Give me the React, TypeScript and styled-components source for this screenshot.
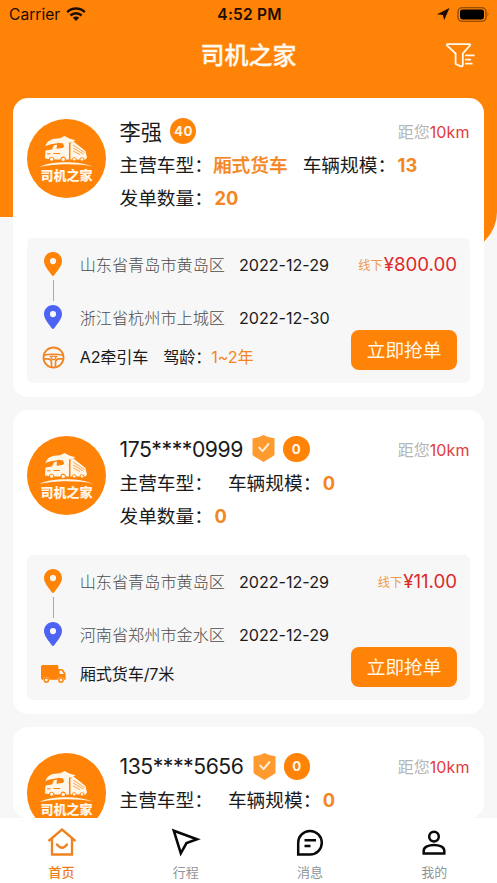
import React from "react";
import styled, { createGlobalStyle } from "styled-components";

const ORANGE = "#ff8307";
const VALUE = "#f4861f";

const GlobalStyle = createGlobalStyle`
  * { box-sizing: border-box; }
  html, body { margin: 0; padding: 0; }
  body {
    font-family: Inter, "Noto Sans CJK SC", sans-serif;
    color: #1b1b1b;
    background: #f7f7f7;
  }
`;

const Screen = styled.div`
  width: 497px;
  height: 883px;
  display: flex;
  flex-direction: column;
  overflow: hidden;
  background-color: #f7f7f7;
`;

const Backdrop = styled.div`
  height: 252px;
  margin-bottom: -252px;
  flex: none;
  border-bottom-right-radius: 40px;
  background:
    linear-gradient(${ORANGE}, ${ORANGE}) 0 0 / 100% 217px no-repeat,
    linear-gradient(${ORANGE}, ${ORANGE}) 100% 0 / 50% 100% no-repeat;
`;

const Bar = styled.header`
  display: grid;
  grid-template-columns: 1fr auto 1fr;
  align-items: center;
  flex: none;
  isolation: isolate;
`;

const StatusBar = styled(Bar)`
  height: 28px;
  padding: 0 7px 0 9px;
  color: #1c0d02;
`;

const Carrier = styled.div`
  display: flex;
  align-items: center;
  gap: 6px;
  font-size: 15.6px;
`;

const Clock = styled.div`
  font-size: 15.5px;
  font-weight: 600;
  letter-spacing: 0.2px;
`;

const StatusIcons = styled.div`
  display: flex;
  align-items: center;
  justify-content: flex-end;
  gap: 7px;
`;

const TitleBar = styled(Bar)`
  height: 56px;
  padding: 0 22.5px;
  color: #fff9ef;
  & > :last-child { justify-self: end; margin-top: -1px; }
`;

const Title = styled.h1`
  margin: 0;
  grid-column: 2;
  font-size: 24px;
  line-height: 32px;
  font-weight: 500;
  -webkit-text-stroke: 0.3px currentColor;
`;

const List = styled.main`
  flex: 1;
  min-height: 0;
  display: flex;
  flex-direction: column;
  gap: 13px;
  padding: 14px 13.5px 0 13.3px;
  isolation: isolate;
`;

const Card = styled.article<{ $inset: number; $clip?: boolean }>`
  flex: ${(p) => (p.$clip ? "1 1 0" : "none")};
  min-height: 0;
  overflow: hidden;
  padding: ${(p) => p.$inset}px 13.8px 13.5px 13.4px;
  border-radius: 15px;
  background: #fff;
`;

const CardHead = styled.div`
  display: flex;
  height: 119px;
`;

const Avatar = styled.div`
  flex: none;
  width: 79.5px;
  height: 79.5px;
  border-radius: 50%;
  background: ${ORANGE};
  color: #fff6e8;
  display: flex;
  flex-direction: column;
  align-items: center;
  padding-top: 15.5px;
`;

const AvatarName = styled.span`
  font-size: 13px;
  line-height: 14px;
  font-weight: 900;
  margin-top: -0.5px;
`;

const Info = styled.div<{ $drop?: boolean }>`
  flex: 1;
  margin: ${(p) => (p.$drop ? -3.6 : -4)}px 0 0 13.3px;
`;

const InfoRow = styled.div`
  display: flex;
  align-items: center;
  height: 33.2px;
  font-size: 18.7px;
  white-space: nowrap;
`;

const Name = styled.span<{ $latin?: boolean }>`
  font-size: 21.2px;
  letter-spacing: ${(p) => (p.$latin ? "-0.47px" : "0")};
  margin-top: ${(p) => (p.$latin ? "0" : "-1px")};
`;

const Shield = styled.svg`
  margin-left: 9.2px;
`;

const Badge = styled.span`
  width: 26.5px;
  height: 26.5px;
  margin-left: 8px;
  border-radius: 50%;
  background: ${ORANGE};
  color: #fff6e8;
  display: flex;
  align-items: center;
  justify-content: center;
  font-size: 13.3px;
  font-weight: 700;
  letter-spacing: 0.5px;
  padding-left: 0.5px;
`;

const Distance = styled.span`
  margin-left: auto;
  font-size: 16px;
  color: #b5b5b5;
`;

const Km = styled.span`
  color: #e23c3c;
  letter-spacing: 0.15px;
`;

const Field = styled.span`
  margin: -1px 15px 0 0;
`;

const Value = styled.b<{ $light?: boolean }>`
  color: ${VALUE};
  font-weight: ${(p) => (p.$light ? 400 : 500)};
  -webkit-text-stroke: ${(p) => (p.$light ? "0" : "0.25px currentColor")};
`;

const Count = styled.b`
  color: ${VALUE};
  font-weight: 700;
  font-size: 18.3px;
  margin-left: 1.5px;
`;

const Panel = styled.section`
  display: flex;
  height: 145.5px;
  border-radius: 6px;
  background: #f7f7f7;
`;

const Rail = styled.div`
  width: 53px;
  padding-top: 14.5px;
  display: flex;
  flex-direction: column;
  align-items: center;
  gap: 4px;
`;

const RailLine = styled.div`
  width: 1px;
  height: 21px;
  background: #aaa;
`;

const RailEnd = styled.div`
  display: flex;
  align-items: center;
  height: 22px;
  margin-top: 13px;
`;

const Stops = styled.div`
  flex: 1;
  font-size: 16.15px;
  white-space: nowrap;
`;

const Stop = styled.div<{ $h: number }>`
  display: flex;
  align-items: center;
  height: ${(p) => p.$h}px;
`;

const Place = styled.span`
  color: #4c4c4c;
  font-weight: 300;
  margin: -2px 14px 0 0;
`;

const When = styled.span`
  letter-spacing: -0.03px;
`;

const Need = styled.span`
  margin-top: -2px;
  letter-spacing: -0.15px;
`;

const Extra = styled(Need)`
  margin-left: 15px;
`;

const Side = styled.div`
  display: flex;
  flex-direction: column;
  justify-content: space-between;
  align-items: flex-end;
  padding: 0 12.6px 13.3px 0;
`;

const Price = styled.div`
  display: flex;
  align-items: center;
  height: 54px;
  font-size: 18.7px;
  color: #dc2a2a;
`;

const Offline = styled.small`
  font-size: 12.2px;
  color: #ee9a4a;
  margin-right: 1px;
`;

const Grab = styled.button`
  width: 106px;
  height: 40px;
  padding: 0 0 3px;
  border: 0;
  border-radius: 8px;
  background: ${ORANGE};
  color: #fff6e8;
  font: inherit;
  font-size: 18.7px;
`;

const TabBar = styled.nav`
  flex: none;
  height: 65.5px;
  display: grid;
  grid-template-columns: repeat(4, 1fr);
  background: #fff;
  isolation: isolate;
`;

const Tab = styled.a<{ $active?: boolean }>`
  display: flex;
  flex-direction: column;
  align-items: center;
  padding: 9px 1px 0 0;
  gap: 6px;
  font-size: 13px;
  line-height: 18px;
  font-weight: ${(p) => (p.$active ? 500 : 400)};
  color: ${(p) => (p.$active ? "#ee7c1c" : "#909599")};
`;

const Pin = ({ color }: { color: string }) => (
  <svg width="18" height="24" viewBox="0 0 18 24">
    <path
      fill={color}
      fillRule="evenodd"
      d="M9 0C4 0 0 4 0 9c0 5 5.2 10.500 7.800 14.200q1.200 1.600 2.400 0C12.800 19.500 18 14 18 9c0-5-4-9-9-9Zm0 6a3.100 3.100 0 1 1 0 6.200A3.100 3.100 0 0 1 9 6Z"
    />
  </svg>
);

const Wheel = () => (
  <svg width="23" height="23" viewBox="0 0 23 23" fill="none" stroke="#f08626" strokeWidth="1.900">
    <circle cx="11.500" cy="11.500" r="10" />
    <path d="M2 9.300C7 7.900 16 7.900 21 9.300M2 12.800h3.500c2.600 0 4 1.700 4 4v4.500M21 12.800h-3.500c-2.600 0-4 1.700-4 4v4.500" strokeWidth="1.700" />
    <path d="M8.500 10.300h6l-1.700 3.200h-2.600Z" strokeWidth="1.300" />
  </svg>
);

const Truck = () => (
  <svg width="25" height="18" viewBox="0 0 25 18">
    <path fill="#ff8307" d="M1.500 0H16a1.400 1.400 0 0 1 1.400 1.400V4h3.200q1 0 1.700.9L24 7.600q.6.800.6 1.700v5.400h-1.200a3.500 3.500 0 0 0-6.800 0H8.800a3.500 3.500 0 0 0-6.800 0H1.500A1.500 1.500 0 0 1 0 13.200V1.500A1.500 1.500 0 0 1 1.500 0Z" />
    <path fill="#fff" d="M18.700 5.600h1.800l2.400 3.300h-4.200Z" />
    <circle cx="5.400" cy="15" r="2.100" fill="#fff" stroke="#ff8307" strokeWidth="1.500" />
    <circle cx="20" cy="15" r="2.100" fill="#fff" stroke="#ff8307" strokeWidth="1.500" />
  </svg>
);

const AvatarArt = () => (
  <svg width="56" height="34" viewBox="0 0 56 34" fill="currentColor">
    <path d="M7.500 12.500C8.500 6.500 14 4.300 22 4.200L26.500 2 32 4.700 37.500 6.300 34 8.500H31V13H26.500L25 9.600 20.500 8.800C17 10.500 12.500 9 7.500 12.500Z" />
    <path d="M7.500 16.500 14 15.500 16 11.200 19 10.800 18.500 14.800 24.500 14 27 11.500 31 13.500V25.500H28C27.500 21.500 22.800 21.500 22.300 25.500H16.500C16 21.800 11.500 21.800 11 25L7 24.500Z" />
    <path d="M32.500 9.500 35.500 7.500 47.500 17 49 23.500 47.500 25.500H46.500C46 22.500 42 22.500 41.500 25.500H38.500C38 22.500 34.500 22.500 34 25.500H32.500Z" />
    <path d="M35 11 46.500 18.500M35 14 45.500 20M35 17 42 20.500" fill="none" stroke="#ff8307" strokeWidth=".7" />
    <path d="M9 19.800h3.500M15.500 19.500h6.500" stroke="#ff8307" strokeWidth="1" />
    <circle cx="13.700" cy="25.200" r="1.600" />
    <circle cx="25.200" cy="25.400" r="1.700" />
    <circle cx="36.200" cy="25.300" r="1.300" />
    <circle cx="44" cy="25.300" r="1.400" />
    <path d="M1 33.300C10 27.300 40 26 55 32.800 40 29.200 14 29.800 1 33.300Z" />
  </svg>
);

const ShieldCheck = () => (
  <Shield width="23" height="27" viewBox="0 0 23 27">
    <path fill="#ff9a2e" d="M11.500 0q5 3 11 3.300v16.200q-.2 1.200-1.600 1.800L11.500 27 2 21.300Q.6 20.700.5 19.500V3.300Q6.500 3 11.500 0Z" />
    <path d="m7.200 12.600 3.400 3.500 5.800-7" fill="none" stroke="#fff1dc" strokeWidth="2" strokeLinecap="round" strokeLinejoin="round" />
  </Shield>
);

const WifiIcon = () => (
  <svg width="20" height="14" viewBox="0 0 20 14" fill="none" stroke="currentColor" strokeWidth="2.500">
    <path d="M1.200 5.200a12.500 12.500 0 0 1 17.600 0M4.400 8.500a8 8 0 0 1 11.200 0" />
    <path d="M6.800 10.700a4.600 4.600 0 0 1 6.400 0L10 14Z" fill="currentColor" stroke="none" />
  </svg>
);

const LocationIcon = () => (
  <svg width="13" height="12" viewBox="0 0 13 12">
    <path fill="currentColor" d="M12.500 0 7.200 12 5.900 6.900 0 6.200Z" />
  </svg>
);

const BatteryIcon = () => (
  <svg width="33" height="15" viewBox="0 0 33 15">
    <rect x="1" y=".700" width="28" height="13.600" rx="4" fill="none" stroke="#1c0d02" strokeOpacity=".6" strokeWidth="1.100" />
    <rect x="3" y="2.600" width="24" height="9.800" rx="2.300" fill="#000" />
    <path d="M30.700 5.300q1.800 2.200 0 4.400Z" fill="#1c0d02" fillOpacity=".6" />
  </svg>
);

const FilterIcon = () => (
  <svg width="29" height="25" viewBox="0 0 29 25" fill="none" stroke="currentColor" strokeWidth="1.800" strokeLinejoin="round" strokeLinecap="round">
    <path d="M1.500 1.200h22q1 .2.500 1.200l-7.200 8.100v11.800q-.3 1.500-1.700 1l-4.800-1.900q-.7-.4-.7-1.200V10.500L.9 2.400q-.4-1 .6-1.200Z" />
    <path d="M19.800 12.400h8M19.800 16.600h4.500M19.800 20.700h6" />
  </svg>
);

const HomeIcon = () => (
  <svg width="30" height="30" viewBox="0 0 30 30" fill="none" stroke="#ee8220" strokeWidth="2.300">
    <path d="M1.500 14 15 2.500 28.500 14M5 11.500V27.500h20V11.500" />
    <path d="M10 17.500q5 6.500 10 0" strokeLinecap="round" />
  </svg>
);

const TripIcon = () => (
  <svg width="30" height="30" viewBox="0 0 30 30" fill="none" stroke="#080808" strokeWidth="2.600">
    <path d="M2.800 3.700 26 12.300 15.500 16.100 9.800 26.300Z" />
  </svg>
);

const MessageIcon = () => (
  <svg width="30" height="30" viewBox="0 0 30 30" fill="none" stroke="#080808" strokeWidth="2.500">
    <path d="M3.200 27.500V15.700a11.800 11.800 0 1 1 11.800 11.800Z" />
    <path d="M9.500 13.300H21M9.500 19h6" />
  </svg>
);

const MeIcon = () => (
  <svg width="30" height="30" viewBox="0 0 30 30" fill="none" stroke="#080808" strokeWidth="2.500">
    <circle cx="15" cy="9.600" r="4.800" />
    <path d="M4.700 26.500v-2.700c0-7.700 20.600-7.700 20.600 0v2.700Z" />
  </svg>
);

interface Order {
  name: string;
  verified?: boolean;
  score: number;
  truckType?: string;
  fleet: number;
  sent?: number;
  trip?: {
    from: string;
    fromDate: string;
    to: string;
    toDate: string;
    need: string;
    years?: string;
    price: string;
  };
}

const orders: Order[] = [
  {
    name: "李强", score: 40, truckType: "厢式货车", fleet: 13, sent: 20,
    trip: { from: "山东省青岛市黄岛区", fromDate: "2022-12-29", to: "浙江省杭州市上城区", toDate: "2022-12-30", need: "A2牵引车", years: "1~2年", price: "¥800.00" },
  },
  {
    name: "175****0999", verified: true, score: 0, fleet: 0, sent: 0,
    trip: { from: "山东省青岛市黄岛区", fromDate: "2022-12-29", to: "河南省郑州市金水区", toDate: "2022-12-29", need: "厢式货车/7米", price: "¥11.00" },
  },
  { name: "135****5656", verified: true, score: 0, fleet: 0 },
];

const OrderCard = ({ order }: { order: Order }) => {
  const { trip } = order;
  return (
    <Card $inset={order.verified ? 26.4 : 20.5} $clip={!trip}>
      <CardHead>
        <Avatar>
          <AvatarArt />
          <AvatarName>司机之家</AvatarName>
        </Avatar>
        <Info $drop={order.verified}>
          <InfoRow>
            <Name $latin={order.verified}>{order.name}</Name>
            {order.verified && <ShieldCheck />}
            <Badge>{order.score}</Badge>
            <Distance>距您<Km>10km</Km></Distance>
          </InfoRow>
          <InfoRow>
            <Field>主营车型：<Value>{order.truckType}</Value></Field>
            <Field>车辆规模：<Count>{order.fleet}</Count></Field>
          </InfoRow>
          {order.sent !== undefined && (
            <InfoRow>
              <Field>发单数量：<Count>{order.sent}</Count></Field>
            </InfoRow>
          )}
        </Info>
      </CardHead>
      {trip && (
        <Panel>
          <Rail>
            <Pin color="#ff8307" />
            <RailLine />
            <Pin color="#4c63f4" />
            <RailEnd>{trip.years ? <Wheel /> : <Truck />}</RailEnd>
          </Rail>
          <Stops>
            <Stop $h={54}><Place>{trip.from}</Place><When>{trip.fromDate}</When></Stop>
            <Stop $h={52}><Place>{trip.to}</Place><When>{trip.toDate}</When></Stop>
            <Stop $h={27}>
              <Need>{trip.need}</Need>
              {trip.years && <Extra>驾龄：<Value $light>{trip.years}</Value></Extra>}
            </Stop>
          </Stops>
          <Side>
            <Price><Offline>线下</Offline>{trip.price}</Price>
            <Grab>立即抢单</Grab>
          </Side>
        </Panel>
      )}
    </Card>
  );
};

export default function App() {
  return (
    <>
      <GlobalStyle />
      <Screen>
        <Backdrop />
        <StatusBar>
          <Carrier>Carrier<WifiIcon /></Carrier>
          <Clock>4:52 PM</Clock>
          <StatusIcons><LocationIcon /><BatteryIcon /></StatusIcons>
        </StatusBar>
        <TitleBar>
          <Title>司机之家</Title>
          <FilterIcon />
        </TitleBar>
        <List>
          {orders.map((order) => <OrderCard key={order.name} order={order} />)}
        </List>
        <TabBar>
          <Tab $active><HomeIcon />首页</Tab>
          <Tab><TripIcon />行程</Tab>
          <Tab><MessageIcon />消息</Tab>
          <Tab><MeIcon />我的</Tab>
        </TabBar>
      </Screen>
    </>
  );
}
